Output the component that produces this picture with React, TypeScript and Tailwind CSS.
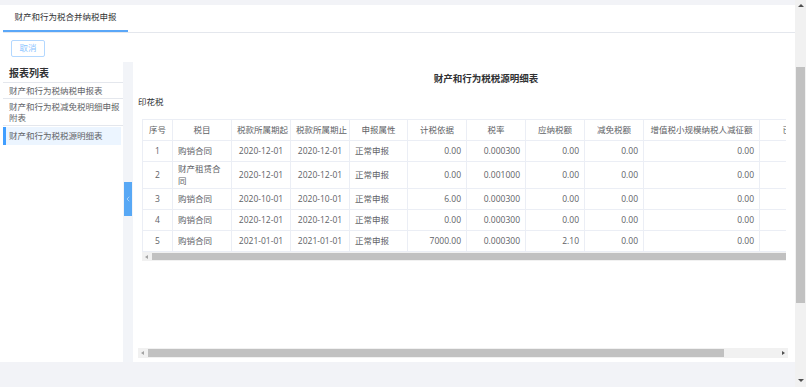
import { ChevronLeft } from "lucide-react"

const cols = [
  { label: "序号", w: "w-[30px]", align: "text-center" },
  { label: "税目", w: "w-[59px]", align: "text-left" },
  { label: "税款所属期起", w: "w-[59px]", align: "text-center" },
  { label: "税款所属期止", w: "w-[59px]", align: "text-center" },
  { label: "申报属性", w: "w-[58px]", align: "text-left" },
  { label: "计税依据", w: "w-[59px]", align: "text-right" },
  { label: "税率", w: "w-[59px]", align: "text-right" },
  { label: "应纳税额", w: "w-[59px]", align: "text-right" },
  { label: "减免税额", w: "w-[59px]", align: "text-right" },
  { label: "增值税小规模纳税人减征额", w: "w-[116px]", align: "text-right" },
  { label: "已缴税额", w: "w-[80px]", align: "text-right" },
]

const rows = [
  ["1", "购销合同", "2020-12-01", "2020-12-01", "正常申报", "0.00", "0.000300", "0.00", "0.00", "0.00", ""],
  ["2", "财产租赁合同", "2020-12-01", "2020-12-01", "正常申报", "0.00", "0.001000", "0.00", "0.00", "0.00", ""],
  ["3", "购销合同", "2020-10-01", "2020-10-01", "正常申报", "6.00", "0.000300", "0.00", "0.00", "0.00", ""],
  ["4", "购销合同", "2020-12-01", "2020-12-01", "正常申报", "0.00", "0.000300", "0.00", "0.00", "0.00", ""],
  ["5", "购销合同", "2021-01-01", "2021-01-01", "正常申报", "7000.00", "0.000300", "2.10", "0.00", "0.00", ""],
]

const menu = ["财产和行为税纳税申报表", "财产和行为税减免税明细申报附表", "财产和行为税税源明细表"]

export default function App() {
  return (
    <div className="flex h-[387px] w-[806px] overflow-hidden bg-[#f2f3f7] font-['Open_Sans','Noto_Sans_CJK_SC',sans-serif] text-[8.5px] text-[#606266]">
      <div className="flex w-[795px] flex-col pt-[5px]">
        <div className="flex h-[357px] flex-col bg-white pl-[3px]">
          <div className="flex h-[28px] border-b border-[#e4e7ed] pr-[3px]">
            <div className="flex w-[125px] items-center justify-center border-b-2 border-[#5aa7f8] text-[8.5px] text-[#303133]">
              财产和行为税合并纳税申报
            </div>
          </div>

          <div className="flex h-[31px] items-center pl-[8px]">
            <button className="h-[17px] w-[34px] rounded-[2px] border border-[#b3d8ff] bg-white text-[8.5px] text-[#8cc5ff]">
              取消
            </button>
          </div>

          <div className="flex flex-1">
            <div className="w-[120px] pt-[3px]">
              <div className="border-b border-[#e4e7ed] pb-[2px] pl-[6px] text-[10px] font-bold leading-[13px] text-[#303133]">报表列表</div>
              {menu.map((m, i) => (
                <div
                  key={m}
                  className={
                    i === 2
                      ? "mt-[1px] mr-[2px] border-l-[3px] border-[#409eff] bg-[#ecf5ff] py-[3px] pl-[3px] pr-[2px] leading-[12px]"
                      : "border-b border-[#e4e7ed] py-[2px] pl-[6px] pr-[2px] leading-[11px]"
                  }
                >
                  {m}
                </div>
              ))}
            </div>

            <div className="relative -mt-[2px] w-[10px] bg-[#f2f4f8]">
              <div className="absolute left-[1px] top-[120px] flex h-[34px] w-[8px] items-center justify-center bg-[#58a8f5]">
                <ChevronLeft size={10} strokeWidth={1.4} className="text-white" />
              </div>
            </div>

            <div className="flex flex-1 flex-col pl-[5px] pr-[7px]">
              <div className="pl-[46px] pt-[9px] text-center text-[9.5px] font-semibold leading-[12px] text-[#303133]">
                财产和行为税税源明细表
              </div>
              <div className="mt-[11px] text-[8.5px] leading-[12px] text-[#303133]">印花税</div>

              <div className="ml-[4px] mt-[11px] w-[644px] overflow-hidden">
                <table className="w-[697px] table-fixed border-collapse">
                  <colgroup>
                    {cols.map((c) => (
                      <col key={c.label} className={c.w} />
                    ))}
                  </colgroup>
                  <thead>
                    <tr>
                      {cols.map((c) => (
                        <th key={c.label} className="h-[21px] overflow-hidden whitespace-nowrap border border-[#ebeef5] px-[5px] text-center font-normal leading-[12px]">
                          {c.label}
                        </th>
                      ))}
                    </tr>
                  </thead>
                  <tbody>
                    {rows.map((r) => (
                      <tr key={r[0]}>
                        {r.map((v, j) => (
                          <td key={j} className={`h-[21px] border border-[#ebeef5] px-[5px] py-[1px] leading-[12px] ${cols[j].align}`}>
                            {v}
                          </td>
                        ))}
                      </tr>
                    ))}
                  </tbody>
                </table>
                <div className="flex h-[9px] items-center bg-[#f1f1f1]">
                  <span className="ml-[3px] h-0 w-0 border-y-[2px] border-r-[3px] border-y-transparent border-r-[#a3a3a3]" />
                  <div className="ml-[4px] h-[7px] flex-1 bg-[#c1c1c1]" />
                </div>
              </div>

              <div className="mt-auto mb-[4px]">
                <div className="flex h-[10px] items-center bg-[#f1f1f1]">
                  <span className="ml-[3px] h-0 w-0 border-y-[2px] border-r-[3px] border-y-transparent border-r-[#a3a3a3]" />
                  <div className="ml-[4px] h-[8px] w-[576px] bg-[#c1c1c1]" />
                  <span className="ml-auto mr-[3px] h-0 w-0 border-y-[2px] border-l-[3px] border-y-transparent border-l-[#505050]" />
                </div>
              </div>
            </div>
          </div>
        </div>
        <div className="flex-1 pl-[3px]" />
      </div>

      <div className="relative w-[11px] bg-[#f1f1f1]">
        <span className="absolute left-[3px] top-[4px] h-0 w-0 border-x-[3px] border-b-[3px] border-x-transparent border-b-[#505050]" />
        <div className="absolute left-[1px] top-[67px] h-[236px] w-[9px] bg-[#c1c1c1]" />
        <span className="absolute bottom-[5px] left-[3px] h-0 w-0 border-x-[3px] border-t-[3px] border-x-transparent border-t-[#505050]" />
      </div>
    </div>
  )
}
